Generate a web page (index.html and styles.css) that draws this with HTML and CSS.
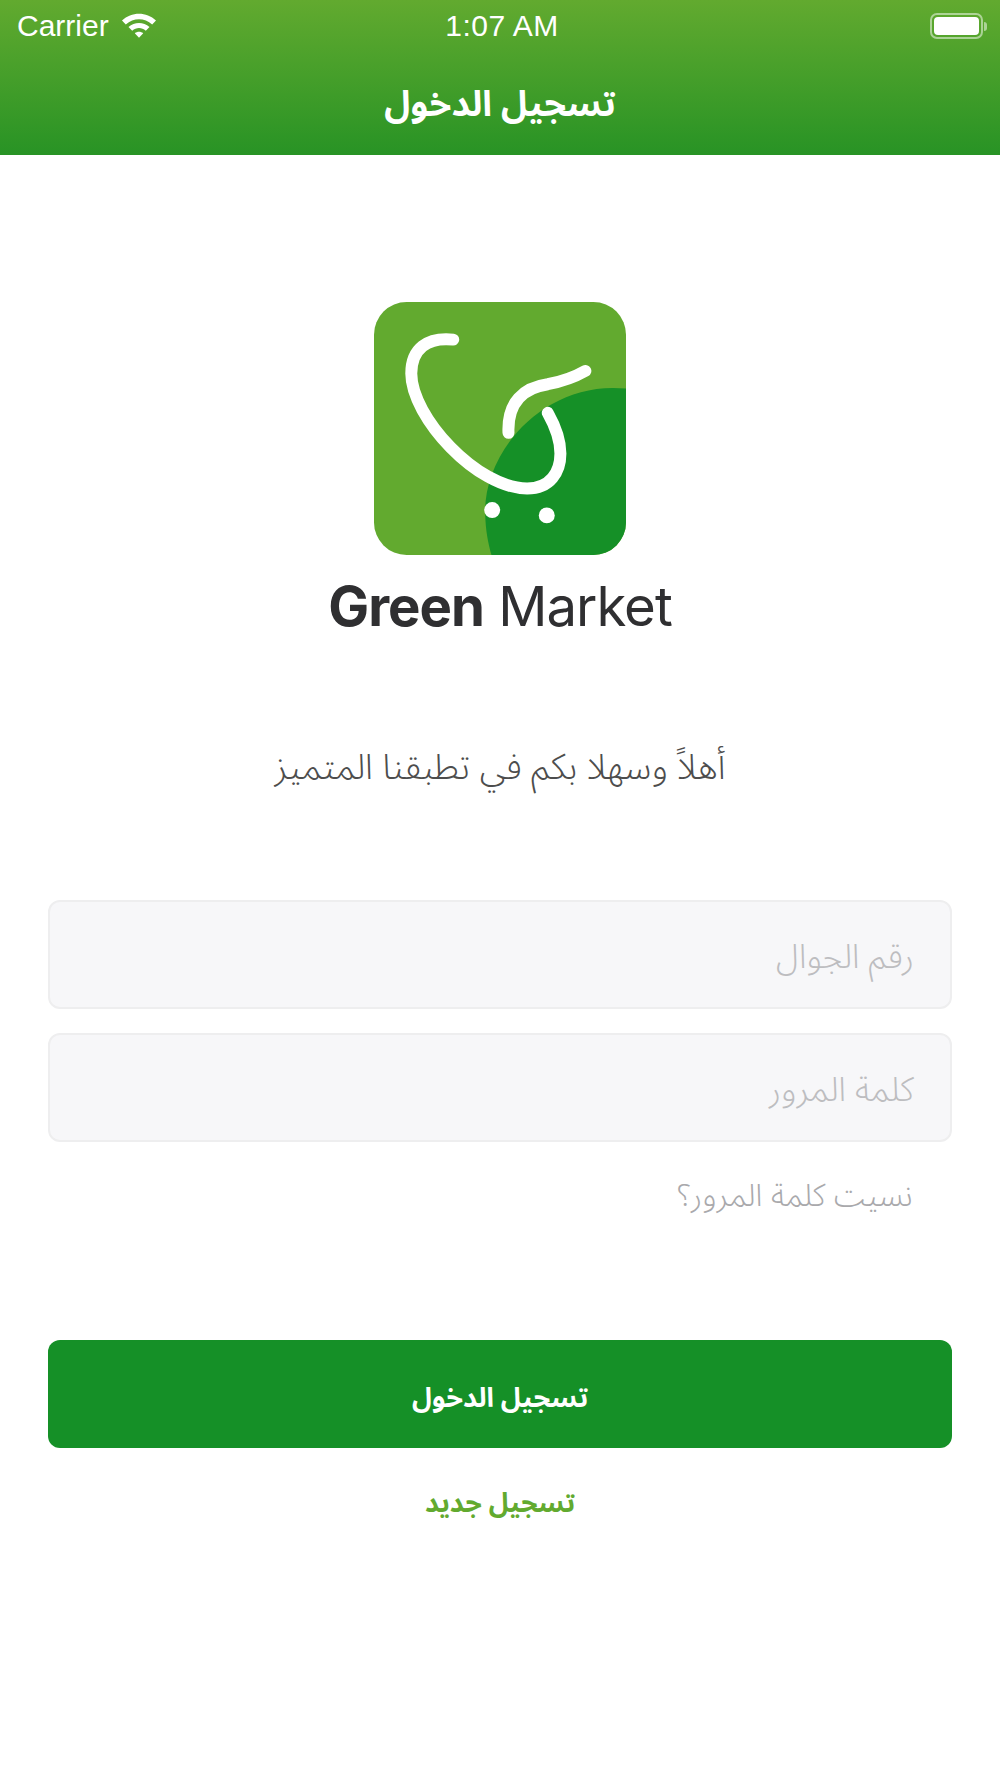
FILE: index.html
```html
<!DOCTYPE html>
<html lang="ar">
<head>
<meta charset="utf-8">
<title>Green Market</title>
<link rel="stylesheet" href="styles.css">
</head>
<body>
<header class="app-header">
  <div class="status-bar">
    <div class="status-left">
      <span class="carrier">Carrier</span>
      <svg class="wifi" viewBox="0 0 36 27" aria-hidden="true">
        <path d="M1 9.500C10.500 0.500 25.500 0.500 35 9.500L31.200 13.500C23.500 6.500 12.500 6.500 4.800 13.500Z" fill="#fff"/>
        <path d="M7.500 16C13.500 10.600 22.500 10.600 28.500 16L24.800 19.800C20.800 16.200 15.200 16.200 11.200 19.800Z" fill="#fff"/>
        <path d="M13.800 22.300C16.300 20.300 19.700 20.300 22.200 22.300L18 26.800Z" fill="#fff"/>
      </svg>
    </div>
    <span class="clock">1:07 AM</span>
    <div class="battery"><span class="battery-shell"><span class="battery-fill"></span></span><span class="battery-cap"></span></div>
  </div>
  <h1 class="app-title" dir="rtl">تسجيل الدخول</h1>
</header>
<main class="login">
  <div class="brand">
    <svg class="logo" viewBox="190 65 757 760" aria-hidden="true">
      <rect x="190" y="65" width="757" height="760" rx="98" fill="#62aa2f"/>
      <path d="M947 325C705 300 520 510 524 700C525 750 533 790 543 825H849A98 98 0 0 0 947 727Z" fill="#159027"/>
      <path d="M428 178C350 170 302 205 302 280C302 410 500 625 650 625C720 625 750 575 750 520C750 475 730 430 712 398" fill="none" stroke="#fff" stroke-width="36" stroke-linecap="round"/>
      <path d="M825 272C790 292 750 305 712 312C640 322 590 365 594 458" fill="none" stroke="#fff" stroke-width="36" stroke-linecap="round"/>
      <circle cx="545" cy="690" r="24" fill="#fff"/>
      <circle cx="709" cy="706" r="24" fill="#fff"/>
    </svg>
    <div class="wordmark"><b>Green</b> Market</div>
  </div>
  <p class="welcome" dir="rtl">أهلاً وسهلا بكم في تطبقنا المتميز</p>
  <form class="fields" dir="rtl">
    <div class="field">رقم الجوال</div>
    <div class="field">كلمة المرور</div>
  </form>
  <p class="forgot" dir="rtl">نسيت كلمة المرور؟</p>
  <div class="submit" dir="rtl">تسجيل الدخول</div>
  <p class="register" dir="rtl">تسجيل جديد</p>
</main>
</body>
</html>
```
FILE: styles.css
```css
* { box-sizing: border-box; }
html, body { margin: 0; padding: 0; background: #fff; }
body {
  width: 1000px;
  height: 1778px;
  overflow: hidden;
  font-family: "Noto Sans Arabic", "DejaVu Sans", "Liberation Sans", sans-serif;
}
.app-header {
  height: 155px;
  background: linear-gradient(#62aa2f, #289325);
  color: #fff;
}
.status-bar {
  height: 52px;
  padding: 0 13px 0 17px;
  display: grid;
  grid-template-columns: 1fr auto 1fr;
  align-items: center;
  font-family: "Liberation Sans", sans-serif;
  font-size: 30px;
}
.status-left { display: flex; align-items: center; gap: 12px; }
.wifi { width: 36px; height: 27px; margin-top: -3px; }
.clock { font-size: 30px; letter-spacing: 0.5px; }
.battery { justify-self: end; display: flex; align-items: center; gap: 1px; }
.battery-shell {
  width: 53px;
  height: 26px;
  border: 2px solid rgba(255,255,255,.5);
  border-radius: 7px;
  padding: 2px;
  display: block;
}
.battery-fill { display: block; height: 100%; background: #fff; border-radius: 4px; }
.battery-cap { width: 3px; height: 9px; background: rgba(255,255,255,.5); border-radius: 0 3px 3px 0; }
.app-title {
  margin: 0;
  height: 103px;
  padding-top: 2px;
  display: flex;
  align-items: center;
  justify-content: center;
  font-size: 35.500px;
  font-weight: 700;
}
.login { padding: 147px 48px 0; }
.brand { display: flex; flex-direction: column; align-items: center; }
.logo { width: 252px; height: 253px; display: block; }
.wordmark {
  margin-top: 19px;
  font-family: "Inter", "Liberation Sans", sans-serif;
  font-size: 54.500px;
  letter-spacing: -1px;
  line-height: 64px;
  color: #2f2f31;
  white-space: nowrap;
}
.wordmark b { font-weight: 700; }
.welcome {
  margin: 105px 0 0;
  height: 50px;
  line-height: 50px;
  text-align: center;
  font-size: 35.700px;
  font-weight: 300;
  color: #4d4d4d;
}
.fields { margin-top: 107px; display: flex; flex-direction: column; gap: 24px; }
.field {
  height: 109px;
  background: #f7f7f9;
  border: 2px solid #eeeeef;
  border-radius: 12px;
  padding: 5px 36px 0;
  display: flex;
  align-items: center;
  font-size: 34px;
  font-weight: 300;
  color: #bdbdc0;
}
.forgot {
  margin: 30px 0 0;
  padding: 0 39px;
  height: 48px;
  line-height: 48px;
  font-size: 31.500px;
  font-weight: 300;
  color: #a9a9ac;
}
.submit {
  margin-top: 120px;
  height: 108px;
  padding-top: 8px;
  background: #159027;
  border-radius: 12px;
  color: #fff;
  display: flex;
  align-items: center;
  justify-content: center;
  font-size: 27px;
  font-weight: 700;
}
.register {
  margin: 32px 0 0;
  height: 48px;
  line-height: 48px;
  text-align: center;
  font-size: 26.700px;
  font-weight: 700;
  color: #62aa2f;
}
```
